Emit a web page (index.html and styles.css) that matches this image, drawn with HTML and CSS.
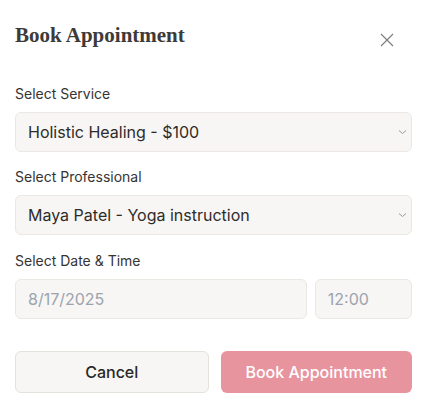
FILE: index.html
```html
<!DOCTYPE html>
<html lang="en">
<head>
<meta charset="utf-8">
<title>Book Appointment</title>
<link rel="stylesheet" href="styles.css">
</head>
<body>
<div class="dialog">
  <div class="header">
    <h2 class="title">Book Appointment</h2>
    <button class="close" aria-label="Close">
      <svg width="14" height="14" viewBox="0 0 14 14"><path d="M1 1L13 13M13 1L1 13" stroke="#7a7a7a" stroke-width="1.1" fill="none"/></svg>
    </button>
  </div>
  <div class="field">
    <label class="label">Select Service</label>
    <div class="select-wrap">
      <select class="control"><option>Holistic Healing - $100</option></select>
      <svg class="chev" width="9" height="6" viewBox="0 0 9 6"><path d="M1 1.5L4.5 4.5L8 1.5" stroke="#9a9a9a" stroke-width="1" fill="none"/></svg>
    </div>
  </div>
  <div class="field">
    <label class="label">Select Professional</label>
    <div class="select-wrap">
      <select class="control"><option>Maya Patel - Yoga instruction</option></select>
      <svg class="chev" width="9" height="6" viewBox="0 0 9 6"><path d="M1 1.5L4.5 4.5L8 1.5" stroke="#9a9a9a" stroke-width="1" fill="none"/></svg>
    </div>
  </div>
  <div class="field last">
    <label class="label">Select Date &amp; Time</label>
    <div class="datetime">
      <input class="control muted" type="text" value="8/17/2025" disabled>
      <input class="control muted" type="text" value="12:00" disabled>
    </div>
  </div>
  <div class="actions">
    <button class="btn cancel">Cancel</button>
    <button class="btn primary">Book Appointment</button>
  </div>
</div>
</body>
</html>
```
FILE: styles.css
```css
* { box-sizing: border-box; }
html, body { margin: 0; background: #fff; }
body { font-family: Inter, "Noto Sans", sans-serif; }
.dialog {
  padding: 21px 19px 0 15px;
  display: flex;
  flex-direction: column;
}
.header {
  display: flex;
  justify-content: space-between;
  align-items: flex-start;
  margin-bottom: 35px;
}
.title {
  margin: 0;
  font-family: "Liberation Serif", "DejaVu Serif", serif;
  font-weight: 700;
  font-size: 21px;
  line-height: 28px;
  color: #3d3b39;
}
.close {
  border: 0;
  background: none;
  padding: 0;
  margin: 12px 18px 0 0;
  width: 14px;
  height: 14px;
  display: block;
}
.close svg { display: block; }
.field { display: flex; flex-direction: column; margin-bottom: 15px; }
.field.last { margin-top: 1px; }
.label {
  font-size: 14px;
  line-height: 20px;
  color: #363432;
  margin-bottom: 8px;
}
.select-wrap { position: relative; }
.control {
  appearance: none;
  -webkit-appearance: none;
  width: 100%;
  height: 40px;
  border: 1px solid #ebe8e4;
  border-radius: 6px;
  background: #f7f6f4;
  padding: 0 12px;
  font-family: Inter, "Noto Sans", sans-serif;
  font-size: 16px;
  color: #2e2c2a;
  outline: none;
  margin: 0;
}
.chev { position: absolute; right: 5px; top: 17px; }
.datetime {
  display: grid;
  grid-template-columns: 3fr 1fr;
  gap: 8px;
}
.muted { color: #9ca3af; -webkit-text-fill-color: #9ca3af; opacity: 1; }
.actions {
  display: flex;
  gap: 12px;
  margin-top: 17px;
}
.btn {
  flex: 1;
  height: 42px;
  border-radius: 6px;
  font-family: Inter, "Noto Sans", sans-serif;
  font-size: 16px;
  font-weight: 500;
  padding: 0;
}
.cancel {
  background: #f7f6f4;
  border: 1px solid #e5e2de;
  color: #2a2826;
}
.primary {
  background: #e8949f;
  border: 0;
  color: #fff;
}
```
